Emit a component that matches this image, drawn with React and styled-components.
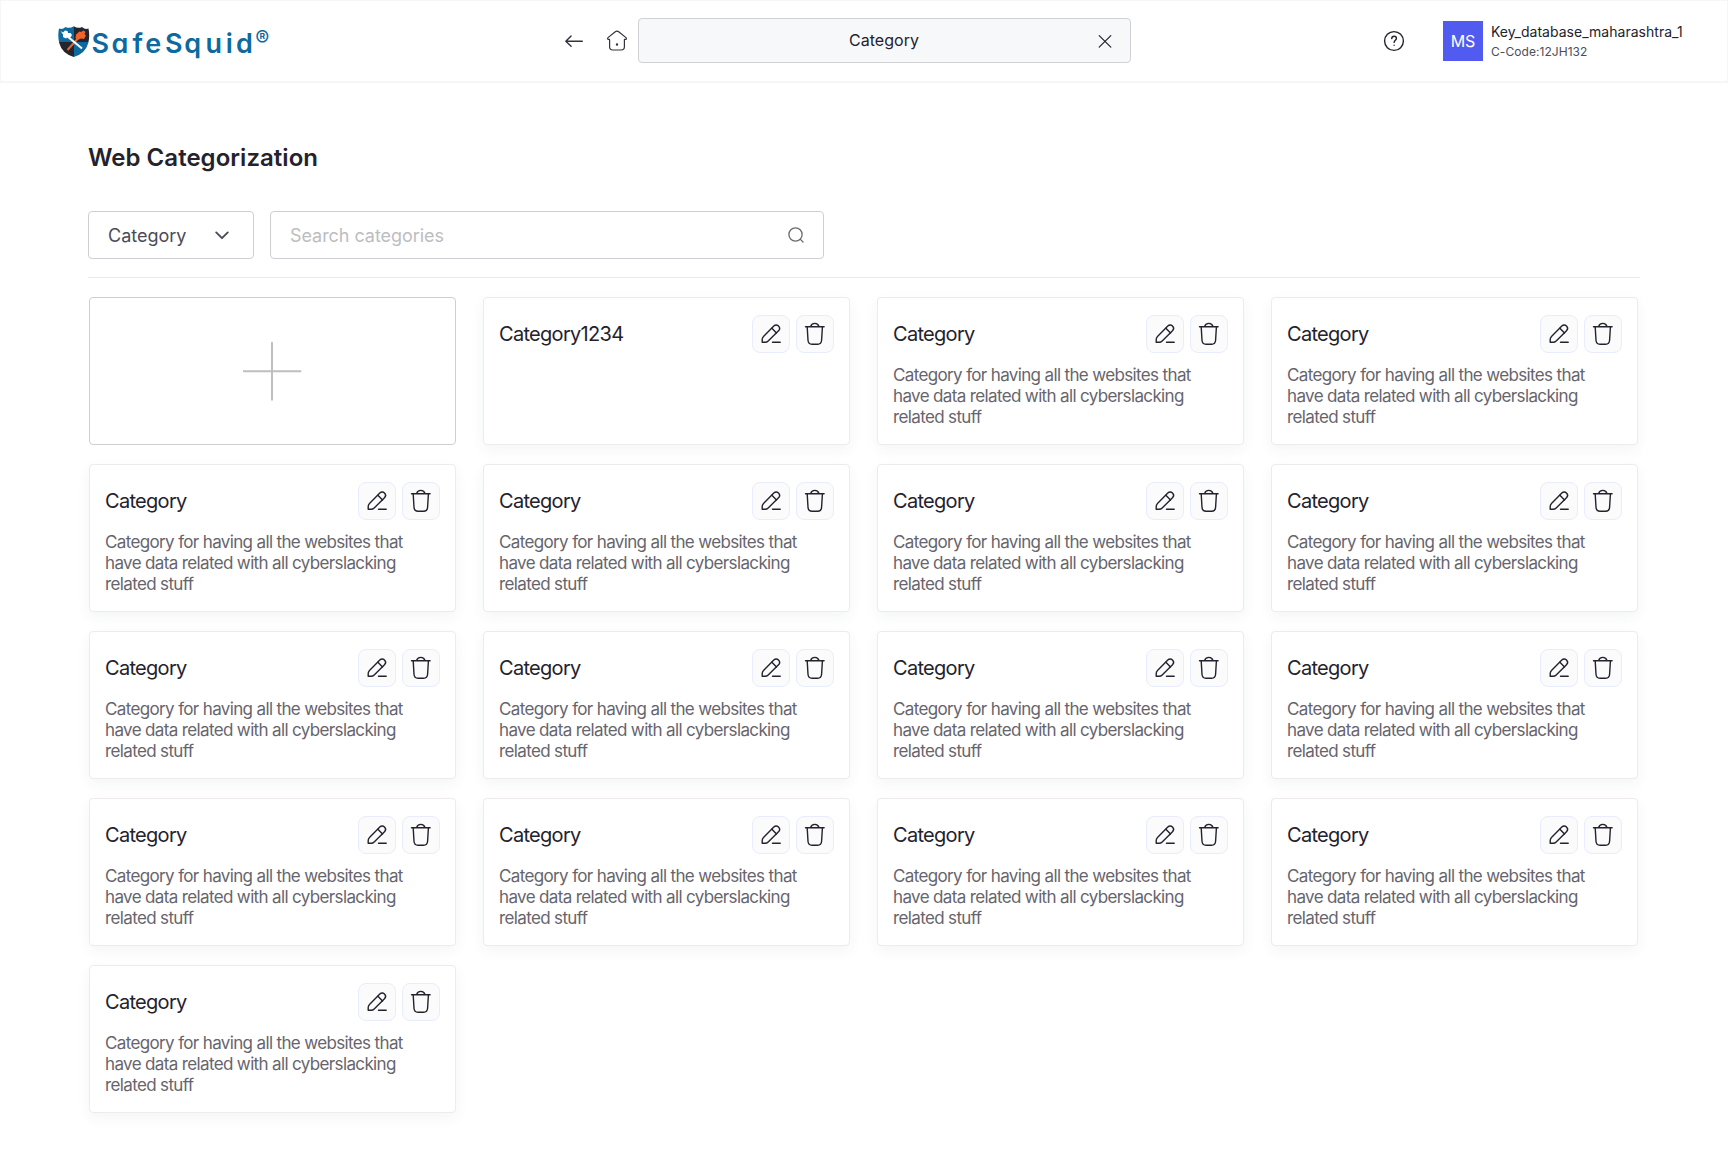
import React, { useState } from 'react';
import styled, { createGlobalStyle } from 'styled-components';

const GlobalStyle = createGlobalStyle`
  * {
    box-sizing: border-box;
  }
  body {
    margin: 0;
    background-color: #fff;
    color: #23222d;
    font-family: Inter, sans-serif;
  }
  button, input {
    font-family: inherit;
  }
`;

const Page = styled.div`
  width: 1728px;
  height: 1169px;
  overflow: hidden;
`;

const Header = styled.header`
  display: grid;
  grid-template-columns: 563px 567px 1fr;
  height: 83px;
  border: 1px solid #f6f6f7;
  border-bottom-width: 2px;
`;

const LogoLink = styled.a`
  display: flex;
  padding: 21px 0 0 56px;
`;

const Nav = styled.nav`
  display: flex;
  align-items: center;
`;

const NavButton = styled.button`
  display: flex;
  padding: 0;
  border: 0;
  background: none;
  color: #33323d;
  margin-right: ${({ $gap }) => $gap}px;
`;

const Tab = styled.div`
  flex: 1;
  display: flex;
  align-items: center;
  height: 45px;
  margin-bottom: 1px;
  padding: 0 16px 0 33px;
  border: 1px solid #d0d1d5;
  border-radius: 4px;
  background-color: #f7f8fa;
  span {
    flex: 1;
    padding-bottom: 1px;
    text-align: center;
    font-size: 16px;
    line-height: 24px;
    letter-spacing: 0.05px;
  }
`;

const Account = styled.div`
  display: flex;
  align-items: center;
  justify-content: flex-end;
  padding-right: 44px;
`;

const Avatar = styled.div`
  width: 40px;
  height: 40px;
  margin: 0 8px 0 37px;
  background-color: #515bef;
  color: #fff;
  font-size: 16px;
  line-height: 40px;
  text-align: center;
`;

const AccountText = styled.div`
  width: 192px;
  white-space: nowrap;
  strong {
    display: block;
    font-size: 14px;
    font-weight: 400;
    line-height: 20px;
    letter-spacing: 0.02px;
  }
  small {
    display: block;
    margin-top: 1px;
    color: #4e4d57;
    font-size: 12px;
    line-height: 18px;
    letter-spacing: 0.06px;
  }
`;

const Main = styled.main`
  padding: 59px 88px 0;
`;

const Title = styled.h1`
  margin: 0;
  font-size: 24px;
  font-weight: 600;
  line-height: 32px;
  letter-spacing: 0.03px;
`;

const Filters = styled.div`
  display: flex;
  gap: 16px;
  padding: 37px 0 18px;
  border-bottom: 1px solid #ebebed;
`;

const Select = styled.button`
  display: flex;
  align-items: center;
  justify-content: space-between;
  width: 166px;
  height: 48px;
  padding: 0 19px;
  border: 1px solid #cfcfd3;
  border-radius: 4px;
  background-color: #fff;
  color: #4c4b55;
  font-size: 18px;
  span {
    padding-top: 1px;
  }
`;

const SearchBox = styled.label`
  display: flex;
  align-items: center;
  width: 554px;
  height: 48px;
  padding: 0 18px 0 19px;
  border: 1px solid #cfcfd3;
  border-radius: 4px;
  color: #6a6971;
  input {
    flex: 1;
    border: 0;
    padding: 1px 0 0;
    outline: 0;
    color: #4c4b55;
    font-size: 18px;
    letter-spacing: -0.05px;
  }
  input::placeholder {
    color: #bdbdbf;
    opacity: 1;
  }
`;

const Grid = styled.div`
  display: grid;
  grid-template-columns: repeat(4, 367px);
  grid-auto-rows: 148px;
  gap: 19px 27px;
  padding: 19px 0 0 1px;
`;

const AddCard = styled.button`
  display: flex;
  align-items: center;
  justify-content: center;
  padding: 0;
  border: 1px solid #cfcfd3;
  border-radius: 4px;
  background-color: #fff;
`;

const Card = styled.article`
  padding: 17px 15px;
  border: 1px solid #ececee;
  border-radius: 4px;
  background-color: #fff;
  box-shadow: 0 5px 14px rgba(44, 63, 88, 0.05);
`;

const CardHead = styled.div`
  display: flex;
  align-items: center;
  gap: 6px;
  h2 {
    flex: 1;
    margin: 0;
    font-size: 20px;
    font-weight: 400;
    line-height: 38px;
    letter-spacing: -0.7px;
  }
`;

const IconButton = styled.button`
  display: flex;
  align-items: center;
  justify-content: center;
  width: 38px;
  height: 38px;
  padding: 0;
  border: 1px solid #e9ecfd;
  border-radius: 8px;
  background-color: #fbfbfc;
  color: #23222d;
`;

const CardText = styled.p`
  width: 310px;
  margin: 12px 0 0;
  color: #66656d;
  font-size: 17px;
  line-height: 21px;
  letter-spacing: -0.64px;
`;

const Icon = ({ size = 24, stroke = 1.4, children }) => (
  <svg
    width={size}
    height={size}
    viewBox={`0 0 ${size} ${size}`}
    fill="none"
    stroke="currentColor"
    strokeWidth={stroke}
    strokeLinecap="round"
    strokeLinejoin="round"
  >
    {children}
  </svg>
);

const LogoText = styled.text`
  fill: #0e6a9e;
  font-family: Inter, sans-serif;
  font-size: ${({ $size }) => $size}px;
  font-weight: ${({ $weight }) => $weight};
  font-feature-settings: 'cv11';
  text-anchor: middle;
`;

const Logo = () => (
  <svg width="216" height="40" viewBox="57 22 216 40">
    <defs>
      <clipPath id="shield">
        <path d="M59 28.5 Q62.5 29.8 65.5 27 Q69.5 29 73.8 26.3 Q78 29 82 27 Q85 29.8 88.5 28.5 Q90 36 88.3 43 Q85.5 53.5 73.8 57 Q62 53.5 59.2 43 Q57.5 36 59 28.5Z" />
      </clipPath>
    </defs>
    <g clipPath="url(#shield)">
      <path fill="#0e6a9e" d="M57 24h17v18H57zM74 42h17v16H74z" />
      <path fill="#25252e" d="M74 24h17v18H74zM57 42h17v16H57z" />
    </g>
    <path d="M67.5 50 L81 35" stroke="#f0642b" strokeWidth="2" />
    <path fill="#f0642b" d="M76 34.5l3.5-3 1.5.5 2.5-1.5 2 1.5-1 2 1.5 1.5-2 3.5-3-.5-3.5 1.5-2-2z" />
    <path d="M64.5 34 L82 48.5" stroke="#fff" strokeWidth="2" />
    <path fill="#fff" d="M60.5 31l2.5 1.5 2-2 2.5.5.5 2 2.5 0 1.5 2-1.5 2.5-3-.5-1.5 1.5-3-1.5 0-2.5z" />
    <LogoText $size={27} $weight={600} y="52.5" x="100.3 120 137.7 153.2 173.7 192.8 213.7 229.2 244.5">
      SafeSquid
    </LogoText>
    <LogoText $size={21} $weight={500} x="262.3" y="46.3">®</LogoText>
  </svg>
);

const EditIcon = () => (
  <Icon>
    <path d="M3.2 20.2v-2.6c0-1.3.4-2.2 1.3-3.1L14.8 4.1c1.5-1.5 3.2-1.5 4.7 0s1.5 3.2 0 4.7L9.2 18.9c-.9.9-1.8 1.3-3.1 1.3z" />
    <path d="M12.9 6.3l4.6 4.6M13.5 20.2h7.7" />
  </Icon>
);

const TrashIcon = () => (
  <Icon>
    <path d="M2.5 4.7h18.6M7.7 4.5C8.2 2.3 9.2 1.4 11.8 1.4s3.6.9 4.1 3.1M4.2 5l.8 13.2c.2 3 1.2 4 4 4h5.6c2.8 0 3.8-1 4-4L19.4 5" />
  </Icon>
);

const description = 'Category for having all the websites that have data related with all cyberslacking related stuff';

const initialCategories = [
  { name: 'Category1234', text: '' },
  ...Array.from({ length: 15 }, () => ({ name: 'Category', text: description })),
];

function App() {
  const [categories, setCategories] = useState(initialCategories);
  const [query, setQuery] = useState('');

  const removeCategory = (index) => setCategories(categories.filter((_, i) => i !== index));

  return (
    <Page>
      <GlobalStyle />
      <Header>
        <LogoLink><Logo /></LogoLink>
        <Nav>
          <NavButton $gap={21}>
            <Icon size={20}>
              <path d="M1.8 10.2h16.5M7.1 4.9L1.8 10.2l5.3 5.1" />
            </Icon>
          </NavButton>
          <NavButton $gap={9}>
            <Icon stroke={1.2}>
              <path d="M4.6 10.6v7.2c0 2.2 1 3.2 3.2 3.2h8.4c2.2 0 3.2-1 3.2-3.2v-7.2M4.5 10.4H3c-.6-.6-.6-1.2 0-1.8l7.3-5.8c1.1-.8 2.3-.8 3.4 0L21 8.6c.6.6.6 1.2 0 1.8h-1.5" />
              <circle cx="12" cy="15.5" r=".6" fill="currentColor" />
            </Icon>
          </NavButton>
          <Tab>
            <span>Category</span>
            <Icon size={18} stroke={1.2}><path d="M3.2 3.6l11.6 11.6M14.8 3.6L3.2 15.2" /></Icon>
          </Tab>
        </Nav>
        <Account>
          <Icon>
            <circle cx="12" cy="12" r="9.4" />
            <path d="M9.7 9.6c.1-1.5 1-2.3 2.4-2.3s2.3.9 2.3 2.1c0 1.7-2.3 1.9-2.3 4M12.1 16.1v.2" />
          </Icon>
          <Avatar>MS</Avatar>
          <AccountText>
            <strong>Key_database_maharashtra_1</strong>
            <small>C-Code:12JH132</small>
          </AccountText>
        </Account>
      </Header>
      <Main>
        <Title>Web Categorization</Title>
        <Filters>
          <Select>
            <span>Category</span>
            <Icon stroke={1.9}><path d="M6.2 9.4l5.8 5.8 5.8-5.8" /></Icon>
          </Select>
          <SearchBox>
            <input
              placeholder="Search categories"
              value={query}
              onChange={({ target }) => setQuery(target.value)}
            />
            <Icon size={18} stroke={1.3}>
              <circle cx="8.5" cy="8.5" r="6.6" />
              <path d="M13.4 13.4l2.6 2.6" />
            </Icon>
          </SearchBox>
        </Filters>
        <Grid>
          <AddCard>
            <Icon size={60} stroke={2}>
              <g stroke="#bfbfc1"><path d="M29 1.8v57M.5 30.2h57" /></g>
            </Icon>
          </AddCard>
          {categories.map(({ name, text }, index) => (
            <Card key={index}>
              <CardHead>
                <h2>{name}</h2>
                <IconButton><EditIcon /></IconButton>
                <IconButton onClick={() => removeCategory(index)}><TrashIcon /></IconButton>
              </CardHead>
              <CardText>{text}</CardText>
            </Card>
          ))}
        </Grid>
      </Main>
    </Page>
  );
}

export default App;
